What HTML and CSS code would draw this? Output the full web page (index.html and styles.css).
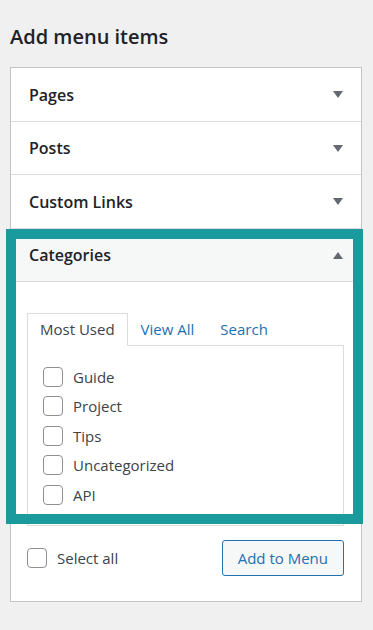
FILE: index.html
```html
<!DOCTYPE html>
<html lang="en">
<head>
    <meta charset="UTF-8">
    <meta name="viewport" content="width=device-width, initial-scale=1.0">
    <title>Add menu items</title>
    <link rel="stylesheet" href="styles.css">
</head>
<body>
    <h2 class="title">Add menu items</h2>

    <div class="panel">
        <div class="box">
            <div class="box-head">
                <span>Pages</span>
                <span class="arrow down"></span>
            </div>
        </div>
        <div class="box">
            <div class="box-head">
                <span>Posts</span>
                <span class="arrow down"></span>
            </div>
        </div>
        <div class="box">
            <div class="box-head">
                <span>Custom Links</span>
                <span class="arrow down"></span>
            </div>
        </div>

        <div class="box open">
            <div class="box-head">
                <span>Categories</span>
                <span class="arrow up"></span>
            </div>
            <div class="box-body">
                <ul class="tabs">
                    <li class="tab active">Most Used</li>
                    <li class="tab"><a href="#">View All</a></li>
                    <li class="tab"><a href="#">Search</a></li>
                </ul>
                <div class="tab-panel">
                    <label class="check"><input type="checkbox"> Guide</label>
                    <label class="check"><input type="checkbox"> Project</label>
                    <label class="check"><input type="checkbox"> Tips</label>
                    <label class="check"><input type="checkbox"> Uncategorized</label>
                    <label class="check"><input type="checkbox"> API</label>
                </div>
            </div>
            <div class="highlight"></div>
        </div>

        <div class="footer">
            <label class="check"><input type="checkbox"> Select all</label>
            <button class="add-btn">Add to Menu</button>
        </div>
    </div>
</body>
</html>
```

FILE: styles.css
```css
body {
    margin: 0;
    padding: 0 12px 0 10px;
    background-color: #f0f0f1;
    font-family: "Open Sans", Arial, sans-serif;
    color: #1d2327;
}
.title {
    margin: 0 0 17px;
    padding-top: 24px;
    font-size: 20px;
    font-weight: 600;
    line-height: 26px;
}
.panel {
    width: 352px;
    box-sizing: border-box;
    background: #fff;
    border: 1px solid #c3c4c7;
}
.box-head {
    display: flex;
    align-items: center;
    justify-content: space-between;
    height: 53.5px;
    box-sizing: border-box;
    padding: 1px 18px 0 18px;
    border-bottom: 1px solid #dcdcde;
    font-size: 16px;
    font-weight: 600;
}
.open {
    position: relative;
}
.open .box-head {
    background: #f6f7f7;
}
.arrow {
    width: 0;
    height: 0;
    border-left: 5px solid transparent;
    border-right: 5px solid transparent;
}
.arrow.down {
    border-top: 7px solid #646970;
}
.arrow.up {
    border-bottom: 7px solid #646970;
}
.box-body {
    padding: 31px 17px 0 16px;
}
.tabs {
    display: flex;
    margin: 0;
    padding: 0;
    list-style: none;
    font-size: 15px;
}
.tab {
    padding: 6px 12px 7px;
    line-height: 18px;
    border: 1px solid transparent;
    border-bottom: none;
}
.tab.active {
    border-color: #dcdcde;
    color: #3c434a;
    margin-bottom: -1px;
    background: #fff;
    position: relative;
}
.tab a {
    color: #2271b1;
    text-decoration: none;
}
.tab-panel {
    display: flex;
    flex-direction: column;
    gap: 9.4px;
    height: 181px;
    box-sizing: border-box;
    padding: 21px 15px 0;
    border: 1px solid #dcdcde;
}
.check {
    display: flex;
    align-items: center;
    gap: 10px;
    font-size: 15px;
    line-height: 20px;
    color: #3c434a;
}
.check input {
    appearance: none;
    margin: 0;
    width: 20px;
    height: 20px;
    border: 1px solid #8c8f94;
    border-radius: 4px;
    background: #fff;
}
.highlight {
    position: absolute;
    top: 0;
    left: -5px;
    right: -2px;
    height: 295px;
    box-sizing: border-box;
    border: 10px solid #1a9a9c;
    pointer-events: none;
}
.footer {
    display: flex;
    align-items: center;
    justify-content: space-between;
    padding: 14px 17px 25px 16px;
}
.add-btn {
    height: 36px;
    padding: 0 15px;
    border: 1px solid #2271b1;
    border-radius: 3px;
    background: #f6f7f7;
    color: #2271b1;
    font-family: inherit;
    font-size: 15px;
}
```
